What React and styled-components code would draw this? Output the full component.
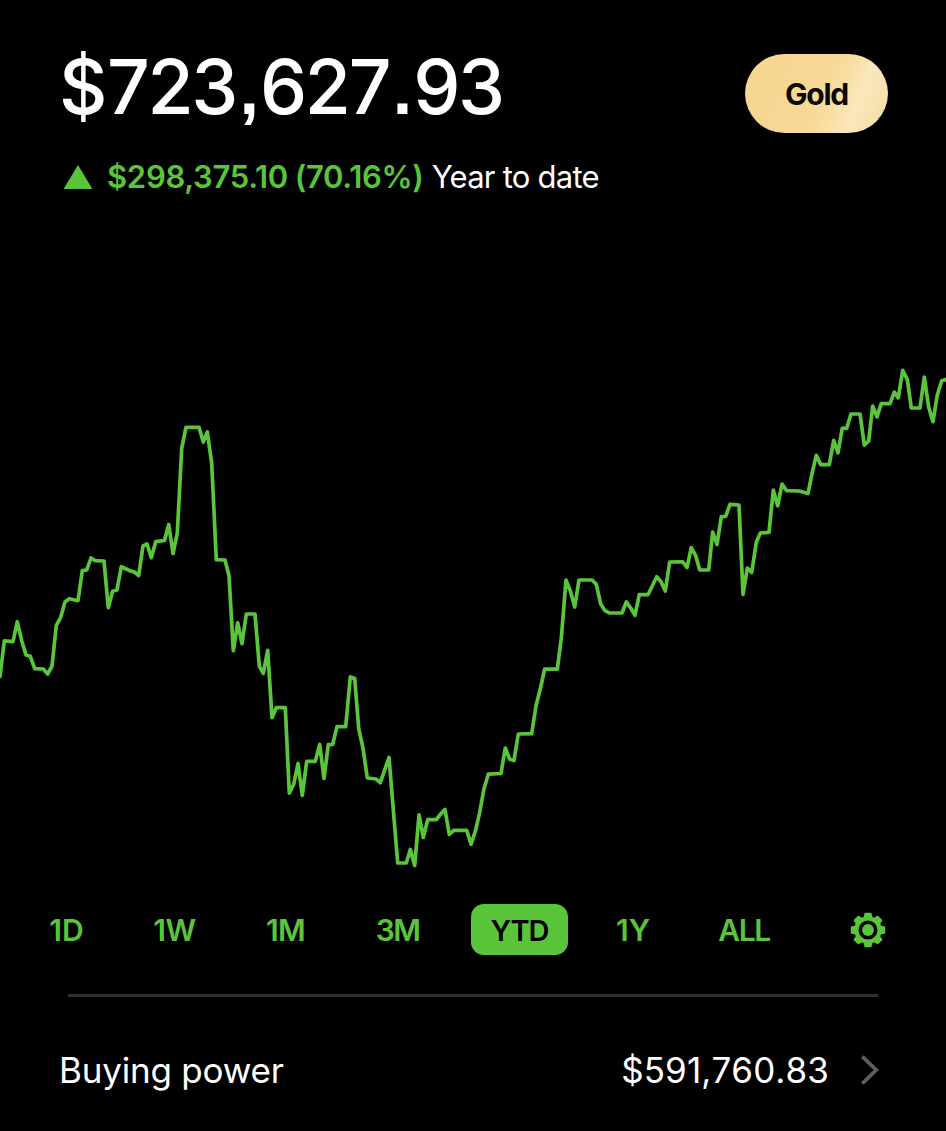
import React from "react";
import styled, { createGlobalStyle } from "styled-components";

const GREEN = "#5ac53a";

const GlobalStyle = createGlobalStyle`
  * { box-sizing: border-box; }
  html, body { margin: 0; padding: 0; background: #000; }
  body { font-family: Inter, "Liberation Sans", sans-serif; color: #fff; }
  button { font-family: inherit; border: 0; padding: 0; background: none; color: inherit; }
`;

const Screen = styled.main`
  width: 946px;
  height: 1131px;
  overflow: hidden;
  display: flex;
  flex-direction: column;
  background: #000;
`;

const Header = styled.header`
  display: flex;
  flex: none;
  justify-content: space-between;
  align-items: flex-start;
  height: 230px;
  padding: 42px 58px 0 59px;
`;

const Summary = styled.div`
  display: flex;
  flex-direction: column;
`;

const Balance = styled.h1`
  margin: 0;
  font-size: 75px;
  line-height: 90px;
  font-weight: 480;
  font-kerning: none;
  letter-spacing: -2.4px;
  white-space: nowrap;
`;

const Currency = styled.span`
  margin-right: 2px;
`;

const Mark = styled.span`
  margin: 0 3.4px 0 3.6px;
  font-family: "Liberation Sans", sans-serif;
  font-size: 70px;
  font-weight: 700;
  line-height: 0;
`;

const Change = styled.div`
  display: flex;
  align-items: center;
  height: 40px;
  margin-top: 25px;
  padding-left: 4px;
  font-size: 31px;
  line-height: 40px;
  white-space: nowrap;
`;

const UpArrow = styled.svg`
  width: 30px;
  height: 26px;
  margin-right: 14px;
`;

const Gain = styled.span`
  color: ${GREEN};
  font-weight: 600;
  letter-spacing: -0.3px;
  word-spacing: -0.8px;
`;

const Period = styled.span`
  margin-left: 8px;
  font-weight: 400;
  letter-spacing: -0.75px;
`;

const GoldButton = styled.button`
  width: 143px;
  height: 79px;
  margin-top: 12px;
  border-radius: 40px;
  background: linear-gradient(112deg, #f6d58f 0%, #f7d896 52%, #f9dfa5 64%, #fae7bd 76%, #f9e2b0 86%, #f5d99b 100%);
  color: #0a0805;
  font-size: 30px;
  font-weight: 700;
  letter-spacing: -1.2px;
`;

const Chart = styled.svg`
  display: block;
  width: 946px;
  height: 674px;
  flex: none;
`;

const Ranges = styled.nav`
  display: grid;
  flex: none;
  grid-template-columns: 71px 79px 77px 81px 97px 64px 92px 63px;
  column-gap: 33px;
  align-items: center;
  height: 51px;
  padding-left: 31px;
`;

const Range = styled.button`
  height: 51px;
  padding-top: 2px;
  border-radius: 13px;
  background: ${(p) => (p.$active ? GREEN : "transparent")};
  color: ${(p) => (p.$active ? "#000" : GREEN)};
  font-size: ${(p) => (p.$active ? "29px" : "30px")};
  line-height: 49px;
  font-weight: 620;
  letter-spacing: ${(p) => p.$tracking || "0px"};
  white-space: nowrap;
`;

const Gear = styled.svg`
  width: 36px;
  height: 36px;
  justify-self: end;
`;

const Divider = styled.hr`
  width: 810px;
  height: 3px;
  margin: 39px 0 0 68px;
  border: 0;
  flex: none;
  background: #303033;
`;

const PowerRow = styled.section`
  display: flex;
  flex: none;
  align-items: center;
  height: 134px;
  padding: 12px 66px 0 59px;
  font-size: 35px;
  font-weight: 400;
`;

const PowerLabel = styled.span`
  flex: 1;
  letter-spacing: -0.2px;
`;

const PowerValue = styled.span`
  font-kerning: none;
  letter-spacing: 0.1px;
`;

const Chevron = styled.svg`
  width: 20px;
  height: 32px;
  margin-left: 31px;
`;

const points = [
  [0, 676.5], [4.3, 640.9], [13, 641.7], [17.3, 621.7], [21.7, 640.7], [26, 655], [30.3, 656.3], [34.7, 668.7],
  [43.3, 669], [47.7, 674], [52, 666], [56.3, 625.7], [60.6, 617.5], [65, 602], [69.3, 598.7], [78, 600.7],
  [82.3, 570.7], [86.7, 570], [91, 558], [95.3, 560.7], [104, 561], [108.3, 607.7], [112.6, 591.3], [117, 590],
  [121.3, 566.7], [130, 570.7], [134.3, 572], [138.7, 575.5], [143, 546], [147, 544], [151.3, 557.7],
  [155.7, 541.7], [164.5, 540.5], [168.7, 524.5], [173, 553.5], [177.3, 533.3], [181.7, 448.3], [186, 427.3],
  [199, 427.3], [203.3, 442], [207.3, 431.9], [211.7, 463.3], [216.3, 559.7], [225, 560], [229, 575.7],
  [233.3, 650.7], [237.7, 622.9], [242, 643.7], [246.3, 614], [255, 614], [259.3, 666], [263.3, 673.3],
  [267.7, 650.3], [272, 717.7], [276.3, 707.7], [285.3, 707.7], [289.3, 793.2], [293.7, 784.3], [298, 763.5],
  [302.3, 795.5], [306.7, 761.3], [315.3, 761.3], [319.7, 744.5], [324, 778.5], [328.3, 744.7], [332.7, 744.3],
  [337, 726.7], [345.7, 726.7], [350.3, 676.9], [354.7, 678.5], [358.7, 728.3], [363, 748.3], [367.3, 778],
  [376, 779], [380.3, 782.7], [389, 757.5], [397.7, 863], [406.3, 863], [410.3, 849.5], [414.7, 865.5],
  [419, 814.9], [423.3, 837.5], [427.7, 819.7], [436.3, 819.7], [440.7, 814], [445, 809.5], [449.3, 834.5],
  [453.7, 830.3], [466.7, 830.3], [471, 844.3], [475.7, 830], [479.7, 812.3], [483.7, 790], [488.3, 774.2],
  [501, 773.5], [505.3, 748], [509.7, 759.3], [514, 760.6], [518.3, 734], [531.7, 733.7], [536, 705.7],
  [540.3, 689], [544.7, 669], [557.3, 669.2], [561.3, 638.3], [566, 580.2], [570.3, 590.7], [574.7, 607],
  [579, 580], [592, 580], [596.3, 584.3], [600.7, 604], [604.7, 610.3], [609.3, 613], [622, 613],
  [626.3, 601.9], [630.7, 608], [635, 615.4], [639.3, 594.7], [648, 594.7], [656.7, 576.8], [661, 581.7],
  [665.3, 591], [669.7, 562], [682.7, 561.8], [687, 567.5], [691.3, 547.6], [695.7, 555.7], [699.7, 570],
  [708.7, 570], [712.7, 532], [717, 544.5], [721.3, 516.7], [725.7, 516.3], [730, 504.3], [739, 505],
  [743, 594.4], [747.3, 568], [751.7, 572.5], [756.3, 542.3], [760.3, 533], [769, 532.3], [773.3, 490.2],
  [777.7, 505.8], [782, 484], [786.7, 490.7], [799.3, 491], [808, 493.5], [812.3, 472.3], [816.3, 455.3],
  [820.7, 464.6], [829.3, 464.6], [833.7, 440.3], [838, 452.8], [842.3, 428], [846.7, 428.3], [851, 414],
  [860, 414], [864.3, 445.1], [868.7, 441], [872.7, 406], [877, 416.8], [881.3, 403.7], [890, 403.7],
  [894.3, 392.2], [898.3, 397.8], [902.7, 370.4], [907.3, 379.3], [911.3, 408], [920, 408], [924.3, 377],
  [928.7, 407.3], [933, 421.7], [937.3, 395], [941.7, 380.7], [947, 379.2],
];

const ranges = [
  { label: "1D" },
  { label: "1W", tracking: "-0.5px" },
  { label: "1M", tracking: "-0.8px" },
  { label: "3M", tracking: "-1.6px" },
  { label: "YTD", active: true, tracking: "-1px" },
  { label: "1Y" },
  { label: "ALL", tracking: "-1.5px" },
];

export default function App() {
  return (
    <>
      <GlobalStyle />
      <Screen>
        <Header>
          <Summary>
            <Balance>
              <Currency>$</Currency>723<Mark>,</Mark>627<Mark>.</Mark>93
            </Balance>
            <Change>
              <UpArrow viewBox="0 0 30 26">
                <path d="M15 1 L29.4 25 H0.6 Z" fill={GREEN} />
              </UpArrow>
              <Gain>$298,375.10 (70.16%)</Gain>
              <Period>Year to date</Period>
            </Change>
          </Summary>
          <GoldButton>Gold</GoldButton>
        </Header>
        <Chart viewBox="0 230 946 674">
          <polyline
            points={points.map((p) => p.join(",")).join(" ")}
            fill="none"
            stroke={GREEN}
            strokeWidth="3.7"
            strokeLinejoin="round"
            strokeLinecap="round"
          />
        </Chart>
        <Ranges>
          {ranges.map((r) => (
            <Range key={r.label} $active={r.active} $tracking={r.tracking}>
              {r.label}
            </Range>
          ))}
          <Gear viewBox="-18 -18 36 36" fill={GREEN}>
            <circle r="11.6" fill="none" stroke={GREEN} strokeWidth="4.2" />
            {[0, 45, 90, 135, 180, 225, 270, 315].map((a) => (
              <path key={a} d="M-4.4 -12.5 L-3.4 -17.2 H3.4 L4.4 -12.5 Z" transform={`rotate(${a})`} />
            ))}
            <circle r="5.9" />
          </Gear>
        </Ranges>
        <Divider />
        <PowerRow>
          <PowerLabel>Buying power</PowerLabel>
          <PowerValue>$591,760.83</PowerValue>
          <Chevron viewBox="0 0 20 32" fill="none" stroke="#5d6064" strokeWidth="3.8">
            <path d="M2.3 2.5 L16.2 16 L2.3 29.5" />
          </Chevron>
        </PowerRow>
      </Screen>
    </>
  );
}
